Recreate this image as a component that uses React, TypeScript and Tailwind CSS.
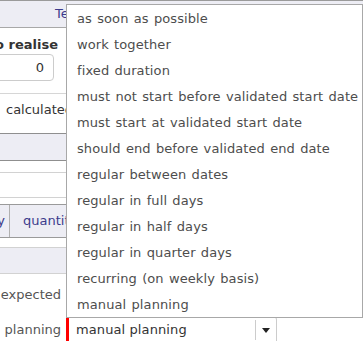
const OPTIONS = [
  "as soon as possible",
  "work together",
  "fixed duration",
  "must not start before validated start date",
  "must start at validated start date",
  "should end before validated end date",
  "regular between dates",
  "regular in full days",
  "regular in half days",
  "regular in quarter days",
  "recurring (on weekly basis)",
  "manual planning",
];

export default function App() {
  return (
    <div className="relative w-[363px] h-[341px] overflow-hidden bg-white text-[13px] text-[#555555] font-['DejaVu_Sans',Verdana,sans-serif]">
      {/* page behind the open list */}
      <div className="flex flex-col">
        <div className="h-[28px] border-y border-t-[#9a9a9a] border-b-[#a8a8a8] bg-[#ededf4] flex items-center pl-[55px] text-[#3c3c8c]">
          Temps
        </div>

        <div className="h-[105px] flex flex-col">
          <div className="h-[26px] flex items-end justify-end w-[58px] font-bold text-[#333333] whitespace-nowrap">
            to realise
          </div>
          <div className="h-[27px] w-[64px] -ml-[10px] border border-[#cccccc] rounded-[4px] flex items-center justify-end pr-[9px] text-[#333333]">
            0
          </div>
          <div className="mt-[12px] h-[33px] w-[140px] border-t border-[#d6d6d6] flex items-center pl-[6px] text-[#333333]">
            calculated
          </div>
        </div>

        <div className="h-[28px] border-y border-[#8f8f8f] bg-[#ededf4]" />
        <div className="h-[12px] border-b border-[#d2d2d2]" />
        <div className="h-[25px] border-b border-[#d2d2d2]" />
        <div className="h-[6px]" />
        <div className="h-[34px] border-y border-[#9a9a9a] bg-[#ededf4] flex items-center text-[#3c3c8c]">
          <div className="w-[10px] h-full border-r border-[#b0b0b0] flex items-center justify-end overflow-hidden">
            <span className="pr-[4px]">y</span>
          </div>
          <span className="pl-[13px]">quantity</span>
        </div>
        <div className="h-[10px] border-b border-[#d2d2d2]" />
        <div className="h-[26px] border-b border-[#d2d2d2] bg-[#ededf4]" />

        <div className="h-[42px] flex items-center justify-end w-[61px]">expected</div>

        <div className="flex items-stretch h-[27px]">
          <div className="w-[66px] shrink-0 flex items-center justify-end pr-[5px] pt-[1px]">planning</div>
          <div className="w-[211px] h-[27px] border-l-[3px] border-l-[#ff0000] border-y border-r border-[#cccccc] rounded-tr-[4px] flex items-center pt-[1px]">
            <span className="flex-1 pl-[7px] text-[#333333] tracking-[0.1px]">manual planning</span>
            <div className="w-[21px] h-[20px] border-l border-[#cccccc] flex items-center justify-center">
              <svg width="8" height="5" viewBox="0 0 8 5">
                <path d="M0 0 L8 0 L4 5 Z" fill="#222222" />
              </svg>
            </div>
          </div>
        </div>
      </div>

      {/* open option list */}
      <div className="absolute left-[66px] top-[4px] w-[297px] bg-white border border-[#a8a8a8]">
        {OPTIONS.map((o) => (
          <div key={o} className="h-[26px] flex items-center pl-[10px] pt-[2px] whitespace-nowrap text-[#4d4d4d] tracking-[0.1px] [word-spacing:1px]">
            {o}
          </div>
        ))}
      </div>
    </div>
  );
}
